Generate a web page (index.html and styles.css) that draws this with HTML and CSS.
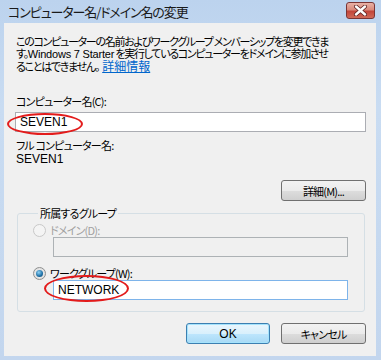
FILE: index.html
```html
<!DOCTYPE html>
<html lang="ja">
<head>
  <meta charset="UTF-8" />
  <title>コンピューター名/ドメイン名の変更</title>
  <link rel="stylesheet" href="styles.css">
</head>
<body>
<div class="window">
  <div class="titlebar">
    <span class="title">コンピューター名/ドメイン名の変更</span>
    <span class="close">
      <svg width="15" height="11" viewBox="0 0 15 11">
        <path d="M3 1.5 L12 9.5 M12 1.5 L3 9.5" stroke="#5a2020" stroke-width="4" stroke-linecap="round"/>
        <path d="M3 1.5 L12 9.5 M12 1.5 L3 9.5" stroke="#ffffff" stroke-width="2.4" stroke-linecap="round"/>
      </svg>
    </span>
  </div>

  <div class="content">
    <p class="intro">このコンピューターの名前およびワークグループ メンバーシップを変更できま<br>す。<span class="latin">Windows 7 Starter</span> を実行しているコンピューターをドメインに参加させ<br>ることはできません。 <a href="#">詳細情報</a></p>

    <div class="field-label">コンピューター名(C):</div>
    <div class="textbox latin">SEVEN1<span class="mark mark-name"></span></div>

    <div class="full-label">フル コンピューター名:</div>
    <div class="full-value latin">SEVEN1</div>

    <div class="more-row"><span class="btn">詳細(M)...</span></div>

    <fieldset class="group">
      <legend>所属するグループ</legend>
      <div class="radio-row disabled"><span class="radio"></span>ドメイン(D):</div>
      <div class="textbox inset disabled"></div>
      <div class="radio-row"><span class="radio checked"></span>ワークグループ(W):</div>
      <div class="textbox inset focus latin">NETWORK<span class="mark mark-group"></span></div>
    </fieldset>

    <div class="actions">
      <span class="btn btn-default latin">OK</span>
      <span class="btn">キャンセル</span>
    </div>
  </div>
</div>
</body>
</html>
```

FILE: styles.css
```css
body {
  margin: 0;
  font-family: "Noto Sans CJK JP", "Liberation Sans", sans-serif;
  font-size: 11px;
  letter-spacing: -0.8px;
  font-feature-settings: "palt";
  color: #000;
}
.latin {
  font-family: "Liberation Sans", "Noto Sans CJK JP", sans-serif;
  font-size: 12px;
  letter-spacing: 0;
}
.window {
  width: 381px;
  height: 360px;
  box-sizing: border-box;
  padding: 0 5px 4px 4px;
  background: linear-gradient(#bcd3ee, #c9dcf2 30%, #c3d6ee);
  display: flex;
  flex-direction: column;
}
.titlebar {
  height: 23px;
  display: flex;
  align-items: center;
  justify-content: space-between;
}
.title {
  font-size: 13px;
  letter-spacing: -1.1px;
  padding-left: 4px;
  color: #1a1a1a;
  white-space: nowrap;
}
.close {
  width: 29px;
  height: 17px;
  box-sizing: border-box;
  margin-right: 1px;
  margin-top: -2px;
  border: 1px solid #7a3535;
  border-radius: 3px;
  background: linear-gradient(#e8b1a6, #d98a7c 45%, #c2453a 55%, #d06a58);
  display: flex;
  align-items: center;
  justify-content: center;
}
.content {
  flex: 1;
  background: #f0f0f0;
  padding: 12px 10px 0 11px;
}
.intro {
  margin: 0 0 0 1px;
  line-height: 12px;
  letter-spacing: -1.3px;
  white-space: nowrap;
}
.intro .latin {
  font-size: 11px;
  letter-spacing: -0.2px;
}
.intro a {
  color: #0066cc;
  font-size: 12px;
  letter-spacing: 0;
  margin-left: 2px;
}
.field-label {
  margin-top: 24px;
  line-height: 11px;
  padding-left: 1px;
}
.textbox {
  position: relative;
  height: 20px;
  box-sizing: border-box;
  margin-top: 5px;
  border: 1px solid #abadb3;
  background: #fff;
  padding-left: 4px;
  line-height: 18px;
}
.full-label {
  margin-top: 8px;
  line-height: 11px;
  padding-left: 1px;
}
.full-value {
  margin-top: 3px;
  line-height: 11px;
  padding-left: 1px;
}
.more-row {
  margin-top: 15px;
  display: flex;
  justify-content: flex-end;
}
.btn {
  width: 85px;
  height: 21px;
  box-sizing: border-box;
  border: 1px solid #707070;
  border-radius: 3px;
  background: linear-gradient(#f2f2f2, #ebebeb 50%, #dddddd 51%, #cfcfcf);
  display: flex;
  align-items: center;
  justify-content: center;
}
.btn-default {
  width: 84px;
  border-color: #3c7fb1;
  background: linear-gradient(#eaf6fd, #d9f0fc 50%, #bee6fd 51%, #a7d9f5);
  box-shadow: inset 0 0 0 1px #a5e3fc;
}
.group {
  margin: 6px 1px 0 2px;
  padding: 0 16px 11px 15px;
  border: 1px solid #d5dfe5;
  border-radius: 3px;
}
.group legend {
  padding: 0 2px;
  margin-left: 5px;
  line-height: 12px;
}
.radio-row {
  display: flex;
  align-items: center;
  gap: 4px;
  height: 12px;
  margin-top: 5px;
}
.radio-row + .textbox {
  margin-top: 1px;
}
.textbox + .radio-row {
  margin-top: 10px;
}
.radio {
  width: 13px;
  height: 13px;
  box-sizing: border-box;
  border-radius: 50%;
  border: 1px solid #8e8f8f;
  background: radial-gradient(circle, #f4f4f4, #d9d9d9);
  display: flex;
  align-items: center;
  justify-content: center;
}
.radio.checked::after {
  content: "";
  width: 7px;
  height: 7px;
  border-radius: 50%;
  background: radial-gradient(circle at 40% 35%, #8fd3f7, #1c6ea4 60%, #0d3f66);
}
.disabled {
  color: #a0a0a0;
}
.disabled .radio {
  border-color: #c8c8c8;
  background: #f4f4f4;
}
.inset {
  margin-left: 20px;
}
.textbox.disabled {
  background: #f0f0f0;
  border-color: #adb2b5;
}
.textbox.focus {
  border-color: #7eb4ea;
}
.mark {
  position: absolute;
  border: 2px solid #e31b1b;
  border-radius: 50%;
}
.mark-name {
  left: -9px;
  top: 0px;
  width: 72px;
  height: 18px;
}
.mark-group {
  left: -10px;
  top: -6px;
  width: 81px;
  height: 23px;
}
.actions {
  margin-top: 11px;
  display: flex;
  justify-content: flex-end;
  gap: 11px;
}
```
